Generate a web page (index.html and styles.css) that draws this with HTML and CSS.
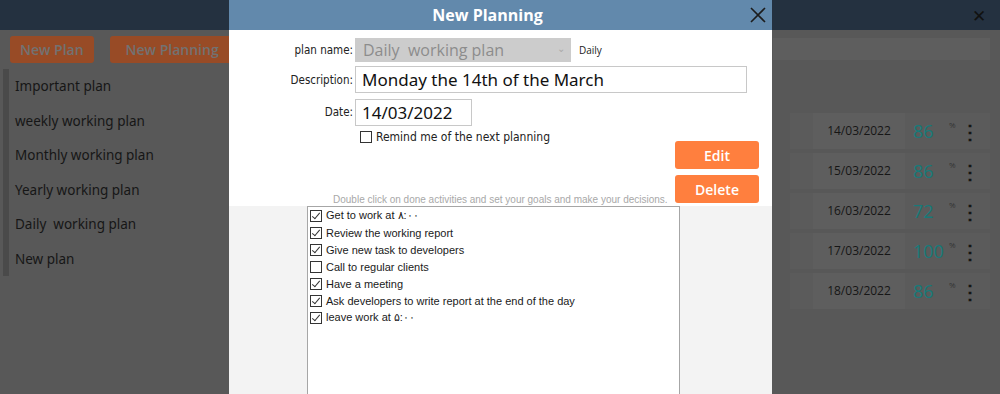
FILE: index.html
```html
<!DOCTYPE html>
<html>
<head>
    <title>Planning</title>
    <link rel="stylesheet" href="styles.css">
</head>
<body>
    <div class="page">
        <div class="topbar">
            <span class="close-main">&#10005;</span>
        </div>
        <div class="toolbar">
            <button class="btn-dim">New Plan</button>
            <button class="btn-dim wide">New Planning</button>
            <div class="search"></div>
        </div>
        <div class="main">
            <ul class="plans">
                <li>Important plan</li>
                <li>weekly working plan</li>
                <li>Monthly working plan</li>
                <li>Yearly working plan</li>
                <li>Daily&nbsp; working plan</li>
                <li>New plan</li>
            </ul>
            <div class="rows">
                <div class="row"><span class="date">14/03/2022</span><span class="pct">86</span><sup>%</sup><span class="kebab">&#8942;</span></div>
                <div class="row"><span class="date">15/03/2022</span><span class="pct">86</span><sup>%</sup><span class="kebab">&#8942;</span></div>
                <div class="row"><span class="date">16/03/2022</span><span class="pct">72</span><sup>%</sup><span class="kebab">&#8942;</span></div>
                <div class="row"><span class="date">17/03/2022</span><span class="pct">100</span><sup>%</sup><span class="kebab">&#8942;</span></div>
                <div class="row"><span class="date">18/03/2022</span><span class="pct">86</span><sup>%</sup><span class="kebab">&#8942;</span></div>
            </div>
        </div>
    </div>

    <div class="modal">
        <div class="modal-header">
            New Planning
            <svg class="modal-close" width="16" height="16" viewBox="0 0 16 16">
                <path d="M1 1 L15 15 M15 1 L1 15" stroke="#1c1c1c" stroke-width="1.6"/>
            </svg>
        </div>
        <div class="modal-body">
            <div class="field">
                <label>plan name:</label>
                <div class="select">Daily&nbsp; working plan<span class="caret">&#8964;</span></div>
                <span class="tag">Daily</span>
            </div>
            <div class="field">
                <label>Description:</label>
                <input class="text desc" type="text" value="Monday the 14th of the March">
            </div>
            <div class="field">
                <label>Date:</label>
                <input class="text date-in" type="text" value="14/03/2022">
            </div>
            <div class="remind">
                <span class="box"></span> Remind me of the next planning
            </div>
            <div class="actions">
                <button class="btn">Edit</button>
                <button class="btn">Delete</button>
            </div>
            <p class="hint">Double click on done activities and set your goals and make your decisions.</p>
        </div>
        <div class="modal-lower">
            <div class="tasks">
                <div class="task"><span class="box checked"></span>Get to work at &#1784;:&#1776;&#1776;</div>
                <div class="task"><span class="box checked"></span>Review the working report</div>
                <div class="task"><span class="box checked"></span>Give new task to developers</div>
                <div class="task"><span class="box"></span>Call to regular clients</div>
                <div class="task"><span class="box checked"></span>Have a meeting</div>
                <div class="task"><span class="box checked"></span>Ask developers to write report at the end of the day</div>
                <div class="task"><span class="box checked"></span>leave work at &#1781;:&#1776;&#1776;</div>
            </div>
        </div>
    </div>
</body>
</html>
```

FILE: styles.css
```css
body {
    margin: 0;
    width: 1000px;
    height: 394px;
    overflow: hidden;
    font-family: "Open Sans", "Noto Sans", sans-serif;
    background-color: #585858;
    position: relative;
}

.page {
    height: 394px;
}

.topbar {
    height: 30px;
    background-color: #243140;
    display: flex;
    justify-content: flex-end;
    align-items: center;
}

.close-main {
    color: #111;
    font-size: 17px;
    margin-right: 14px;
}

.toolbar {
    display: flex;
    align-items: center;
    padding: 5px 10px 0 10px;
    height: 28px;
    gap: 16px;
}

.btn-dim {
    background-color: #984b26;
    color: #727272;
    border: none;
    border-radius: 3px;
    height: 27px;
    padding: 0 10px;
    font-family: "Open Sans", sans-serif;
    font-size: 14px;
    font-weight: 600;
}

.btn-dim.wide {
    width: 125px;
}

.search {
    margin-left: auto;
    width: 217px;
    height: 22px;
    background-color: #5e5e5e;
}

.main {
    display: flex;
}

.plans {
    list-style: none;
    margin: 6px 0 0 3px;
    padding: 0;
    width: 222px;
}

.plans li {
    height: 34.5px;
    line-height: 34px;
    padding-left: 6px;
    font-size: 13.5px;
    color: #161616;
    border-left: 6px solid #4a4a4a;
    font-family: "Noto Sans", sans-serif;
}

.rows {
    margin-left: auto;
    margin-top: 50px;
    margin-right: 10px;
    width: 200px;
}

.row {
    height: 36px;
    margin-bottom: 4px;
    display: flex;
    align-items: center;
    background-color: #5b5b5b;
}

.row .date {
    width: 92px;
    margin-left: 23px;
    text-align: center;
    font-size: 12px;
    color: #161616;
    background-color: #5e5e5e;
    line-height: 36px;
}

.row .pct {
    margin-left: 8px;
    font-size: 18px;
    color: #177a79;
    width: 36px;
}

.row sup {
    font-size: 8px;
    color: #333;
    align-self: flex-start;
    margin-top: 6px;
    width: 11px;
}

.row .kebab {
    font-size: 20px;
    color: #151515;
    font-weight: bold;
}

.modal {
    position: absolute;
    left: 229px;
    top: 0;
    width: 543px;
    height: 394px;
    background-color: #f3f3f3;
    display: flex;
    flex-direction: column;
    overflow: hidden;
}

.modal-header {
    height: 30px;
    flex-shrink: 0;
    background-color: #6289ac;
    color: white;
    font-weight: bold;
    font-size: 16px;
    display: flex;
    align-items: center;
    justify-content: center;
    padding-right: 26px;
    position: relative;
}

.modal-close {
    position: absolute;
    right: 6px;
    top: 7px;
}

.modal-body {
    background-color: white;
    padding: 8px 12px 0 0;
    height: 168px;
    flex-shrink: 0;
    position: relative;
}

.field {
    display: flex;
    align-items: center;
    margin-bottom: 4px;
}

.field label {
    width: 124px;
    text-align: right;
    padding-right: 2px;
    font-size: 11.5px;
    color: #222;
    font-family: "DejaVu Sans Condensed", "Liberation Sans", sans-serif;
}

.select {
    width: 208px;
    height: 24px;
    background-color: #cccccc;
    color: #8c8c8c;
    font-size: 16px;
    line-height: 24px;
    padding-left: 8px;
    position: relative;
}

.caret {
    position: absolute;
    right: 6px;
    top: -2px;
    font-size: 10px;
    color: #aaa;
}

.tag {
    font-size: 10px;
    margin-left: 8px;
    color: #222;
}

.text {
    border: 1px solid #c8c8c8;
    font-family: "Noto Sans", sans-serif;
    font-size: 17px;
    color: #111;
    padding: 0 0 0 6px;
    margin: 0;
    box-sizing: border-box;
    outline: none;
}

.desc {
    width: 392px;
    height: 27px;
}

.date-in {
    width: 117px;
    height: 27px;
    margin-top: 2px;
}

.remind {
    margin: 4px 0 0 131px;
    font-size: 12px;
    color: #222;
    display: flex;
    align-items: center;
    gap: 4px;
    font-family: "DejaVu Sans Condensed", "Liberation Sans", sans-serif;
}

.box {
    display: inline-block;
    width: 10px;
    height: 10px;
    border: 1px solid #333;
    background-color: white;
    position: relative;
    flex-shrink: 0;
}

.box.checked::after {
    content: "";
    position: absolute;
    left: 3px;
    top: 0;
    width: 3px;
    height: 7px;
    border-right: 1px solid #333;
    border-bottom: 1px solid #333;
    transform: rotate(40deg);
}

.actions {
    position: absolute;
    right: 13px;
    top: 111px;
    display: flex;
    flex-direction: column;
    gap: 6px;
    z-index: 1;
}

.btn {
    width: 84px;
    height: 28px;
    background-color: #ff7f3e;
    color: white;
    border: none;
    border-radius: 3px;
    font-family: "Open Sans", sans-serif;
    font-weight: 600;
    font-size: 14px;
}

.hint {
    position: absolute;
    left: 104px;
    top: 164px;
    margin: 0;
    font-size: 10px;
    color: #a8a8a8;
    font-family: "Liberation Sans", sans-serif;
}

.modal-lower {
    flex: 1;
    padding-left: 78px;
}

.tasks {
    width: 371px;
    height: 200px;
    background-color: white;
    border: 1px solid #a6a6a6;
}

.task {
    height: 17px;
    display: flex;
    align-items: center;
    gap: 4px;
    padding-left: 2px;
    font-size: 11px;
    color: #1a1a1a;
    font-family: "Liberation Sans", sans-serif;
}
```
